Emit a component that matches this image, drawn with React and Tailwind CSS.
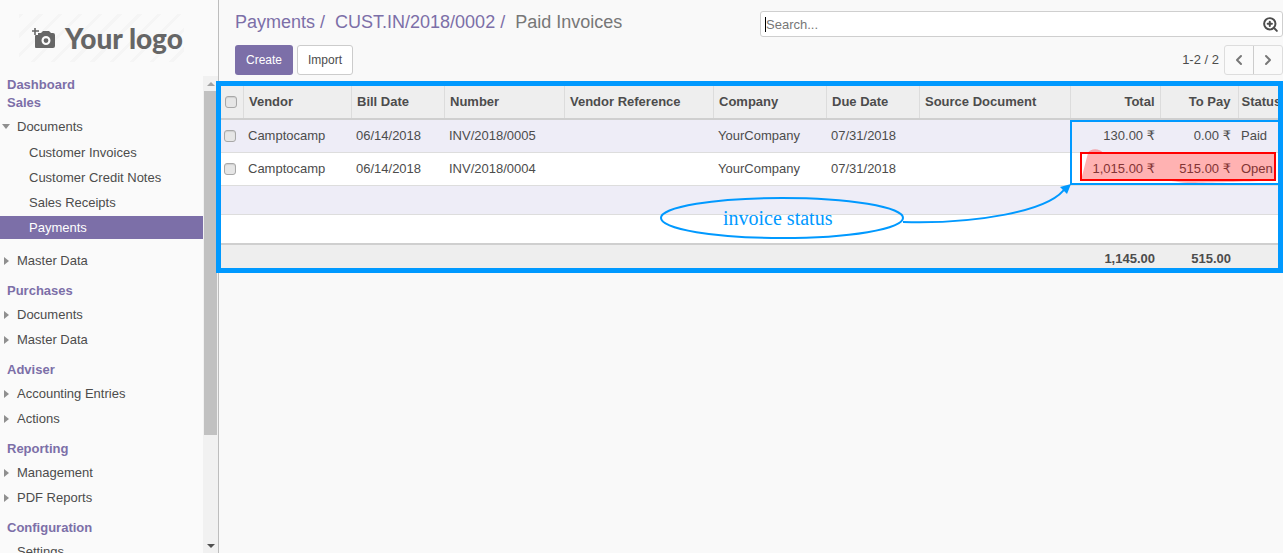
import { ChevronLeft, ChevronRight, ZoomIn } from 'lucide-react'

const rows = [
  { vendor: 'Camptocamp', bill: '06/14/2018', number: 'INV/2018/0005', company: 'YourCompany', due: '07/31/2018', total: '130.00', pay: '0.00', status: 'Paid' },
  { vendor: 'Camptocamp', bill: '06/14/2018', number: 'INV/2018/0004', company: 'YourCompany', due: '07/31/2018', total: '1,015.00', pay: '515.00', status: 'Open' },
]

function MenuHead({ children, className = '' }) {
  return <div className={`flex h-[18px] shrink-0 items-center pl-[7px] font-bold text-[#7c6fa8] ${className}`}>{children}</div>
}

function MenuItem({ children, caret = 'right', className = '' }) {
  return (
    <div className={`flex h-[25px] shrink-0 items-center pb-[2px] text-[#4c4c4c] ${className}`}>
      <span className="flex w-[17px] justify-start pl-[4px]">
        {caret === 'right' && <span className="h-0 w-0 border-y-[4px] border-l-[5px] border-y-transparent border-l-[#8f8f8f]" />}
        {caret === 'down' && <span className="ml-[-2px] h-0 w-0 border-x-[4px] border-t-[5px] border-x-transparent border-t-[#8f8f8f]" />}
      </span>
      {children}
    </div>
  )
}

function SubItem({ children, active }) {
  if (active) {
    return <div className="mb-[2px] flex h-[23px] shrink-0 items-center bg-[#7c6fa8] pl-[29px] text-white">{children}</div>
  }
  return <div className="flex h-[25px] shrink-0 items-center pb-[2px] pl-[29px] text-[#4c4c4c]">{children}</div>
}

function Sidebar() {
  return (
    <aside className="flex h-[553px] w-[219px] shrink-0 overflow-hidden border-r border-[#bdbdbd] bg-[#fafafa]">
      <div className="flex w-[203px] shrink-0 flex-col">
        <div className="shrink-0 px-[19px] pb-[14px] pt-[14px]">
          <div className="flex h-[48px] items-center gap-[10px] whitespace-nowrap bg-[repeating-linear-gradient(135deg,#f5f5f5_0px,#f5f5f5_3px,#fafafa_3px,#fafafa_14px)] pl-[13px] font-['Lato',sans-serif] text-[28px] font-black text-[#666666]">
            <svg width="23" height="22" viewBox="0 0 23 22" className="shrink-0" aria-hidden="true">
              <path d="M3 1v7M0 4h7" stroke="#666" strokeWidth="1.6" />
              <path fillRule="evenodd" fill="#666" d="M4 8h2V6h3l2-2h6l2 2h2a2 2 0 0 1 2 2v11a2 2 0 0 1-2 2H4a1 1 0 0 1-1-1V9a1 1 0 0 1 1-1zm10 1a4.5 4.5 0 1 0 0 9 4.5 4.5 0 0 0 0-9zm0 2.2a2.4 2.4 0 1 1 0 4.8 2.4 2.4 0 0 1 0-4.8z" />
            </svg>
            <span>Your logo</span>
          </div>
        </div>
        <MenuHead>Dashboard</MenuHead>
        <MenuHead>Sales</MenuHead>
        <MenuItem caret="down" className="mb-px mt-[3px]">Documents</MenuItem>
        <SubItem>Customer Invoices</SubItem>
        <SubItem>Customer Credit Notes</SubItem>
        <SubItem>Sales Receipts</SubItem>
        <SubItem active>Payments</SubItem>
        <MenuItem className="mt-[8px]">Master Data</MenuItem>
        <MenuHead className="mt-[8px]">Purchases</MenuHead>
        <MenuItem className="mt-[3px]">Documents</MenuItem>
        <MenuItem>Master Data</MenuItem>
        <MenuHead className="mt-[8px]">Adviser</MenuHead>
        <MenuItem className="mt-[3px]">Accounting Entries</MenuItem>
        <MenuItem>Actions</MenuItem>
        <MenuHead className="mt-[8px]">Reporting</MenuHead>
        <MenuItem className="mt-[3px]">Management</MenuItem>
        <MenuItem>PDF Reports</MenuItem>
        <MenuHead className="mt-[8px]">Configuration</MenuHead>
        <MenuItem caret="none" className="mt-[3px]">Settings</MenuItem>
      </div>
      <div className="flex w-[15px] shrink-0 flex-col pt-[76px]">
        <div className="flex h-[15px] items-center justify-center bg-[#f1f1f1]">
          <span className="h-0 w-0 border-x-[4px] border-b-[4px] border-x-transparent border-b-[#a3a3a3]" />
        </div>
        <div className="flex flex-1 flex-col bg-[#f1f1f1]">
          <div className="mx-px h-[344px] bg-[#c1c1c1]" />
          <div className="flex-1" />
        </div>
        <div className="flex h-[15px] items-center justify-center bg-[#f1f1f1]">
          <span className="h-0 w-0 border-x-[4px] border-t-[4px] border-x-transparent border-t-[#505050]" />
        </div>
      </div>
      <div className="w-px" />
    </aside>
  )
}

function Check() {
  return <span className="block h-[12px] w-[12px] rounded-[3px] border border-[#a8a8a8] bg-[#e6e6e6] shadow-[inset_0_1px_1px_rgba(0,0,0,0.1)]" />
}

function Rupee() {
  return <span className="font-['DejaVu_Sans',sans-serif]">₹</span>
}

const headCell = 'border-r border-[#dcdcdc] pl-[5.5px] pr-[5px] text-left font-bold'

function InvoiceTable() {
  return (
    <table className="w-[1064px] table-fixed border-collapse text-[#4c4c4c]">
      <colgroup>
        <col className="w-[24px]" />
        <col className="w-[108px]" />
        <col className="w-[93px]" />
        <col className="w-[120px]" />
        <col className="w-[149px]" />
        <col className="w-[113px]" />
        <col className="w-[93px]" />
        <col className="w-[151px]" />
        <col className="w-[90px]" />
        <col className="w-[78px]" />
        <col className="w-[45px]" />
      </colgroup>
      <thead>
        <tr className="h-[34px] border-b-2 border-[#cfcfcf] bg-[#eeeeee]">
          <th className="border-r border-[#dcdcdc] pl-[6px]"><Check /></th>
          <th className={headCell}>Vendor</th>
          <th className={headCell}>Bill Date</th>
          <th className={headCell}>Number</th>
          <th className={headCell}>Vendor Reference</th>
          <th className={headCell}>Company</th>
          <th className={headCell}>Due Date</th>
          <th className={headCell}>Source Document</th>
          <th className={`${headCell} !text-right`}>Total</th>
          <th className={`${headCell} !pr-[7px] !text-right`}>To Pay</th>
          <th className="overflow-hidden whitespace-nowrap pl-[3px] text-left font-bold">Status</th>
        </tr>
      </thead>
      <tbody>
        {rows.map((row, i) => (
          <tr key={row.number} className={`h-[33px] border-b border-[#dddddd] ${i === 0 ? 'bg-[#eeedf7]' : 'bg-white'}`}>
            <td className="pl-[5px]"><Check /></td>
            <td className="px-[5px]">{row.vendor}</td>
            <td className="px-[5px]">{row.bill}</td>
            <td className="px-[5px]">{row.number}</td>
            <td />
            <td className="px-[5px]">{row.company}</td>
            <td className="px-[5px]">{row.due}</td>
            <td />
            <td className="px-[5px] text-right">{row.total} <Rupee /></td>
            <td className="px-[7px] text-right">{row.pay} <Rupee /></td>
            <td className="pl-[3px]">{row.status}</td>
          </tr>
        ))}
        <tr className="h-[29px] border-b border-[#dddddd] bg-[#eeedf7]"><td colSpan={11} /></tr>
        <tr className="h-[30px] bg-white"><td colSpan={11} /></tr>
      </tbody>
      <tfoot>
        <tr className="h-[29px] border-t-2 border-[#cfcfcf] bg-[#eeeeee] font-bold">
          <td colSpan={8} />
          <td className="px-[5px] pb-px text-right">1,145.00</td>
          <td className="px-[7px] pb-px text-right">515.00</td>
          <td />
        </tr>
      </tfoot>
    </table>
  )
}

function Annotations() {
  return (
    <>
      <svg width="1283" height="553" viewBox="0 0 1283 553" className="pointer-events-none absolute left-0 top-0" aria-hidden="true">
        <path d="M1088 153c2-5 12-5 15 0h172v27c-20 2-60 2-80 3-10 1-25-3-35-3h-79z" fill="#ff0000" fillOpacity="0.3" />
        <rect x="1081" y="153" width="194" height="27" fill="none" stroke="#ff0000" strokeWidth="2" />
        <rect x="218.5" y="83.5" width="1062" height="187" fill="none" stroke="#0099ff" strokeWidth="5" />
        <rect x="1071" y="121" width="212" height="63" fill="none" stroke="#0099ff" strokeWidth="2" />
        <ellipse cx="782" cy="218" rx="121" ry="20" fill="none" stroke="#0099ff" strokeWidth="2" />
        <path d="M903 222c70 2 148-10 163-35" fill="none" stroke="#0099ff" strokeWidth="2" />
        <path d="M1071 184l-11 3 7 7z" fill="#0099ff" />
      </svg>
      <span className="absolute left-[723px] top-[206px] font-['Liberation_Serif',serif] text-[20px] leading-[24px] text-[#0099ff]">
        invoice status
      </span>
    </>
  )
}

export default function App() {
  return (
    <div className="relative flex h-[553px] w-[1283px] overflow-hidden bg-[#f9f9f9] font-['Liberation_Sans',Arial,sans-serif] text-[13px]">
      <Sidebar />
      <main className="flex min-w-0 flex-1 flex-col">
        <div className="flex h-[45px] shrink-0 justify-between pl-[16px] pt-[11px]">
          <div className="text-[18px] leading-[22px] text-[#7c6fa8]">
            Payments /<span className="ml-[10px]">CUST.IN/2018/0002 /</span>
            <span className="ml-[10px] text-[#777777]">Paid Invoices</span>
          </div>
          <div className="flex h-[26px] w-[523px] items-center justify-between rounded-[3px] border border-[#cfcfcf] bg-white pl-[4px] pr-[3px] pt-px text-[#777777]">
            <span><span className="border-l border-black" />Search...</span>
            <ZoomIn size={17} strokeWidth={2.8} className="-mt-px text-[#4c4c4c]" />
          </div>
        </div>
        <div className="flex h-[35px] shrink-0 items-start justify-between pl-[16px]">
          <div className="flex gap-[4px] text-[12px]">
            <button className="h-[30px] w-[58px] rounded-[3px] bg-[#7c6fa8] text-white">Create</button>
            <button className="h-[30px] w-[56px] rounded-[3px] border border-[#cccccc] bg-white text-[#4c4c4c]">Import</button>
          </div>
          <div className="flex items-center">
            <span className="mr-[5px] text-[#4c4c4c]">1-2 / 2</span>
            <div className="flex h-[30px] w-[59px] rounded-[3px] border border-[#dddddd] bg-[#fafafa] text-[#777777]">
              <span className="flex flex-1 items-center justify-center border-r border-[#cccccc]"><ChevronLeft size={16} strokeWidth={3} /></span>
              <span className="flex flex-1 items-center justify-center"><ChevronRight size={16} strokeWidth={3} /></span>
            </div>
          </div>
        </div>
        <div className="pt-[5px]">
          <InvoiceTable />
        </div>
      </main>
      <Annotations />
    </div>
  )
}
